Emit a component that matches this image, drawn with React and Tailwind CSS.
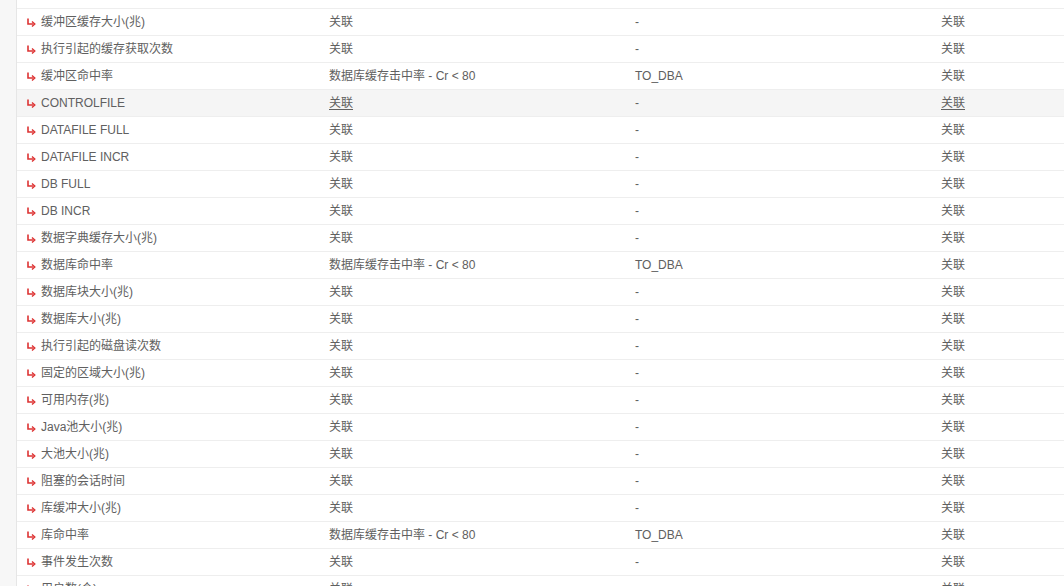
const RULE = "数据库缓存击中率 - Cr < 80";

const rows = [
  { name: "缓冲区缓存大小(兆)" },
  { name: "执行引起的缓存获取次数" },
  { name: "缓冲区命中率", rule: RULE, to: "TO_DBA" },
  { name: "CONTROLFILE", hover: true },
  { name: "DATAFILE FULL" },
  { name: "DATAFILE INCR" },
  { name: "DB FULL" },
  { name: "DB INCR" },
  { name: "数据字典缓存大小(兆)" },
  { name: "数据库命中率", rule: RULE, to: "TO_DBA" },
  { name: "数据库块大小(兆)" },
  { name: "数据库大小(兆)" },
  { name: "执行引起的磁盘读次数" },
  { name: "固定的区域大小(兆)" },
  { name: "可用内存(兆)" },
  { name: "Java池大小(兆)" },
  { name: "大池大小(兆)" },
  { name: "阻塞的会话时间" },
  { name: "库缓冲大小(兆)" },
  { name: "库命中率", rule: RULE, to: "TO_DBA" },
  { name: "事件发生次数" },
  { name: "用户数(个)" },
];

function SubArrow() {
  return (
    <svg width="10" height="10" viewBox="0 0 10 10" className="mr-[5px] shrink-0">
      <path d="M2 1.5 V7 H7.5" fill="none" stroke="#d33" strokeWidth="1.6" />
      <path d="M6 4.5 L8.8 7 L6 9.5" fill="none" stroke="#d33" strokeWidth="1.4" />
    </svg>
  );
}

function Row({ r }) {
  const link = r.hover ? "underline underline-offset-2" : "";
  return (
    <div
      className={
        "grid shrink-0 grid-cols-[302px_306px_306px_1fr] h-[27px] items-center border-b border-[#eeeeee] " +
        (r.hover ? "bg-[#f5f5f5]" : "bg-white")
      }
    >
      <div className="flex items-center pl-[9px]">
        <SubArrow />
        <span>{r.name}</span>
      </div>
      <div className="pl-[10px]">
        <span className={r.rule ? "" : link}>{r.rule || "关联"}</span>
      </div>
      <div className="pl-[10px]">{r.to || "-"}</div>
      <div className="pl-[10px]">
        <span className={link}>关联</span>
      </div>
    </div>
  );
}

export default function App() {
  return (
    <div
      className="flex h-[586px] w-[1064px] overflow-hidden bg-white text-[12px] text-[#606060]"
      style={{ fontFamily: '"Liberation Sans", "Noto Sans CJK SC", sans-serif' }}
    >
      <div className="w-[17px] shrink-0 bg-[#f7f7f7] border-r border-[#e6e6e6]" />
      <div className="flex-1 flex flex-col">
        <div className="h-[9px] shrink-0 border-b border-[#eeeeee]" />
        {rows.map((r) => (
          <Row key={r.name} r={r} />
        ))}
      </div>
    </div>
  );
}
